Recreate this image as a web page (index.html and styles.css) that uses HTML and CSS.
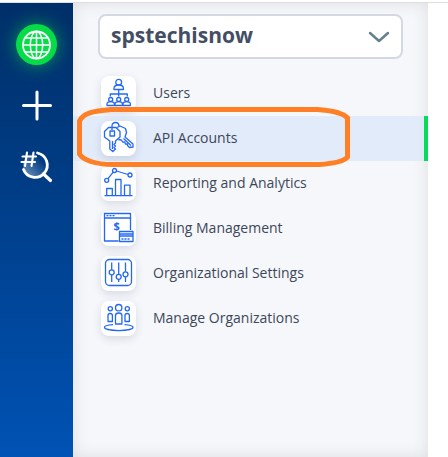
FILE: index.html
```html
<!DOCTYPE html>
<html lang="en">
<head>
<meta charset="utf-8">
<meta name="viewport" content="width=device-width, initial-scale=1">
<title>API Accounts</title>
<link rel="stylesheet" href="styles.css">
</head>
<body>
<div class="app">
  <nav class="rail" aria-label="Main">
    <button class="rail-button rail-button-active" type="button" aria-label="Organization">
      <svg width="41" height="41" viewBox="0 0 41 41" fill="none" stroke="#fff" stroke-width="1.5">
        <circle cx="20.5" cy="21" r="13.5" stroke-width="1.8"/>
        <ellipse cx="20.5" cy="21" rx="6.2" ry="13.5"/>
        <path d="M20.500 7.500v27M7 21h27M9.500 14h22M9.500 28h22"/>
      </svg>
    </button>
    <button class="rail-button" type="button" aria-label="Add">
      <svg width="41" height="41" viewBox="0 0 41 41" fill="none" stroke="#fff" stroke-width="3" stroke-linecap="round">
        <path d="M21 7v27M7.500 20.500h27"/>
      </svg>
    </button>
    <button class="rail-button" type="button" aria-label="Search numbers">
      <svg width="41" height="41" viewBox="0 0 41 41" fill="none" stroke="#fff" stroke-linecap="round">
        <defs>
          <linearGradient id="lens" x1="0.100" y1="0.900" x2="0.800" y2="0.300">
            <stop offset="0" stop-color="#fff" stop-opacity="0.400"/>
            <stop offset="1" stop-color="#fff" stop-opacity="0"/>
          </linearGradient>
        </defs>
        <circle cx="18.500" cy="19" r="11.500" fill="url(#lens)" stroke="none"/>
        <path stroke-width="2.800" d="M21.500 7A12.300 12.300 0 1 1 7.500 23.500"/>
        <path stroke-width="3.200" d="M27.500 28L34.500 34.500"/>
        <path stroke-width="2.100" d="M11 6.500l-2 13.500M17.500 6.500l-2 13.500M6.500 10.500h13.500M5.500 16h13.500"/>
      </svg>
    </button>
  </nav>

  <main class="panel">
    <div class="picker">
      <select class="picker-select" aria-label="Organization">
        <option>spstechisnow</option>
      </select>
      <svg class="picker-arrow" width="22" height="12" viewBox="0 0 22 12" fill="none" stroke="#64808f" stroke-width="2.400" stroke-linecap="round" stroke-linejoin="round">
        <path d="M2 2l9 8 9-8"/>
      </svg>
    </div>

    <nav class="menu" aria-label="Organization menu">
      <a class="menu-item" href="#users">
        <span class="tile">
          <svg class="glyph" viewBox="0 0 35 35">
            <circle cx="17.700" cy="6.200" r="2.900"/>
            <path d="M13 13.500v-1.200q0-3.300 4.700-3.300t4.700 3.300v1.200zM17.700 13.500v7M9.300 20.500V18h17v2.500"/>
            <circle cx="9.700" cy="23.500" r="2"/><circle cx="17.700" cy="23.500" r="2"/><circle cx="25.700" cy="23.500" r="2"/>
            <path d="M6 29.500v-1.200q0-2.600 3.700-2.600t3.700 2.600v1.200zM14 29.500v-1.200q0-2.600 3.700-2.600t3.700 2.600v1.200zM22 29.500v-1.200q0-2.600 3.700-2.600t3.700 2.600v1.200z"/>
          </svg>
        </span>
        <span class="label">Users</span>
      </a>
      <a class="menu-item menu-item-current" href="#api" aria-current="page">
        <span class="tile">
          <svg class="glyph" viewBox="0 0 35 35">
            <path d="M11 9V5Q11 1.500 14.500 1.500T18 5.500M9 10h4.500v5H9z"/>
            <path d="M7.500 6.500h7.500l4 4v5.500l-4.500 4V22l-1.500 1.500 1.500 1.500-1.500 1.500 1.500 1.500-2.700 2.500-3-2.500v-8L3.500 16v-5.500zM11.500 20v8"/>
            <path d="M16 6.500l3-1.500 5.500 2.500 1 4-1.500 4.500 8 7v3l-3.500.5-2-2v-1.500l-2 .2-.7-2.200-2 .2-1.500-2.200-3-.5M22.500 17.500l7.500 7"/>
          </svg>
        </span>
        <span class="label">API Accounts</span>
      </a>
      <a class="menu-item" href="#reporting">
        <span class="tile">
          <svg class="glyph" viewBox="0 0 35 35">
            <circle cx="5.700" cy="14.300" r="2"/><circle cx="13.500" cy="4.500" r="2"/><circle cx="29" cy="9" r="2"/>
            <path d="M7 12.700l5.200-6.500M15.500 5l11.500 3.500M3.500 29.700h28M5.700 29.500v-7h5.600v7M14.500 29.500v-16h5.500v16M23.500 29.500V19.200H29v10.300"/>
          </svg>
        </span>
        <span class="label">Reporting and Analytics</span>
      </a>
      <a class="menu-item" href="#billing">
        <span class="tile">
          <svg class="glyph" viewBox="0 0 35 35">
            <path d="M17.500 30h-14V2.500h26V19M3.500 7h26M18.500 20.500H32v10H18.500zM18.500 23h13.500M18.500 25h13.500"/>
            <path stroke-dasharray="2 1" d="M5.500 4.700h8M20.500 28h8"/>
            <text class="glyph-text" x="15.700" y="18.500" text-anchor="middle">$</text>
          </svg>
        </span>
        <span class="label">Billing Management</span>
      </a>
      <a class="menu-item" href="#settings">
        <span class="tile">
          <svg class="glyph" viewBox="0 0 35 35">
            <rect x="4.500" y="3.500" width="26" height="26" rx="4"/>
            <path d="M10.700 6.500v7.200M10.700 19v7M17.700 6.500v11.700M17.700 23.400V26M24.500 6.500v9.200M24.500 21v5"/>
            <circle cx="10.700" cy="16.300" r="2.500"/><circle cx="17.700" cy="20.800" r="2.500"/><circle cx="24.500" cy="18.300" r="2.500"/>
          </svg>
        </span>
        <span class="label">Organizational Settings</span>
      </a>
      <a class="menu-item" href="#manage">
        <span class="tile">
          <svg class="glyph" viewBox="0 0 35 35">
            <circle cx="17.700" cy="6.700" r="3.200"/><circle cx="9.300" cy="7.700" r="2.100"/><circle cx="26.300" cy="7.700" r="2.100"/>
            <path d="M14.500 23v-8.500q0-2.500 3.200-2.500t3.200 2.500V23zM7 20.500v-6q0-2 2.200-2t2.200 2v6zM24 20.500v-6q0-2 2.200-2t2.200 2v6z"/>
            <path d="M12 23.700C6 24.200 3.500 25 3.500 26.300c0 4.300 28.500 4.300 28.500 0 0-1.300-2.500-2.100-8.500-2.600"/>
          </svg>
        </span>
        <span class="label">Manage Organizations</span>
      </a>
    </nav>
  </main>
  <svg class="highlight" width="274" height="61" viewBox="0 0 274 61" fill="none" stroke="#ff7f27" stroke-width="5" aria-hidden="true">
    <path d="M34 2.500H240C256 3.500 266 6 270.500 11V50C267 54.500 258 56.500 242 57.500H36C18 57.500 6 53 2.500 47V14C6 6 16 4 34 2.500Z"/>
  </svg>
</div>
</body>
</html>
```
FILE: styles.css
```css
* {
  box-sizing: border-box;
}

body {
  margin: 0;
  padding-top: 2px;
  background: #fff;
  color: #3d4759;
  font: 500 14px/20px "Open Sans", "Noto Sans", sans-serif;
}

.app {
  position: relative;
  display: flex;
  min-height: calc(100vh - 2px);
  padding-right: 20px;
  border-top: 1px solid #dedede;
}

.rail {
  display: flex;
  flex: 0 0 73px;
  flex-direction: column;
  align-items: center;
  gap: 20px;
  padding-top: 21px;
  background: linear-gradient(#002f69, #003b82 35%, #0052b4);
}

.rail-button {
  width: 41px;
  height: 41px;
  padding: 0;
  border: 0;
  border-radius: 50%;
  background: none;
}

.rail-button svg {
  display: block;
}

.rail-button-active {
  background: #06dc48;
  box-shadow: 0 0 18px rgba(6, 220, 72, 0.6);
}

.panel {
  flex: 1;
  min-width: 0;
  padding-top: 11px;
  background: #f5f7fb;
  box-shadow: inset 0 0 16px rgba(60, 50, 50, 0.12);
}

.picker {
  display: grid;
  align-items: center;
  margin: 0 25px 12px;
}

.picker-select,
.picker-arrow {
  grid-area: 1 / 1;
}

.picker-select {
  width: 100%;
  height: 45px;
  padding: 0 40px 4px 11px;
  border: 2px solid #d3d9e3;
  border-radius: 8px;
  background: #fff;
  color: #434e65;
  font: 700 21px/28px "Open Sans", "Noto Sans", sans-serif;
  appearance: none;
}

.picker-arrow {
  justify-self: end;
  margin-right: 13px;
  pointer-events: none;
}

.menu {
  display: flex;
  flex-direction: column;
}

.menu-item {
  display: flex;
  align-items: center;
  gap: 17px;
  height: 45px;
  padding-left: 28px;
  border-right: 4px solid transparent;
  color: inherit;
  text-decoration: none;
}

.menu-item-current {
  border-right-color: #06dc5a;
  background: rgba(209, 226, 250, 0.55);
}

.label {
  padding-bottom: 2px;
}

.tile {
  width: 35px;
  height: 35px;
  border-radius: 8px;
  background: #fff;
  box-shadow: 0 3px 8px rgba(40, 50, 80, 0.14);
}

.glyph {
  display: block;
  width: 35px;
  height: 35px;
  fill: none;
  stroke: #2368f5;
  stroke-width: 1.3px;
  stroke-linejoin: round;
}

.glyph-text {
  fill: #2368f5;
  stroke: none;
  font: 700 11px "Open Sans", sans-serif;
}

/* Hand-drawn marker ring laid over the current item */
.highlight {
  position: absolute;
  top: 104px;
  left: 77px;
  pointer-events: none;
}
```
